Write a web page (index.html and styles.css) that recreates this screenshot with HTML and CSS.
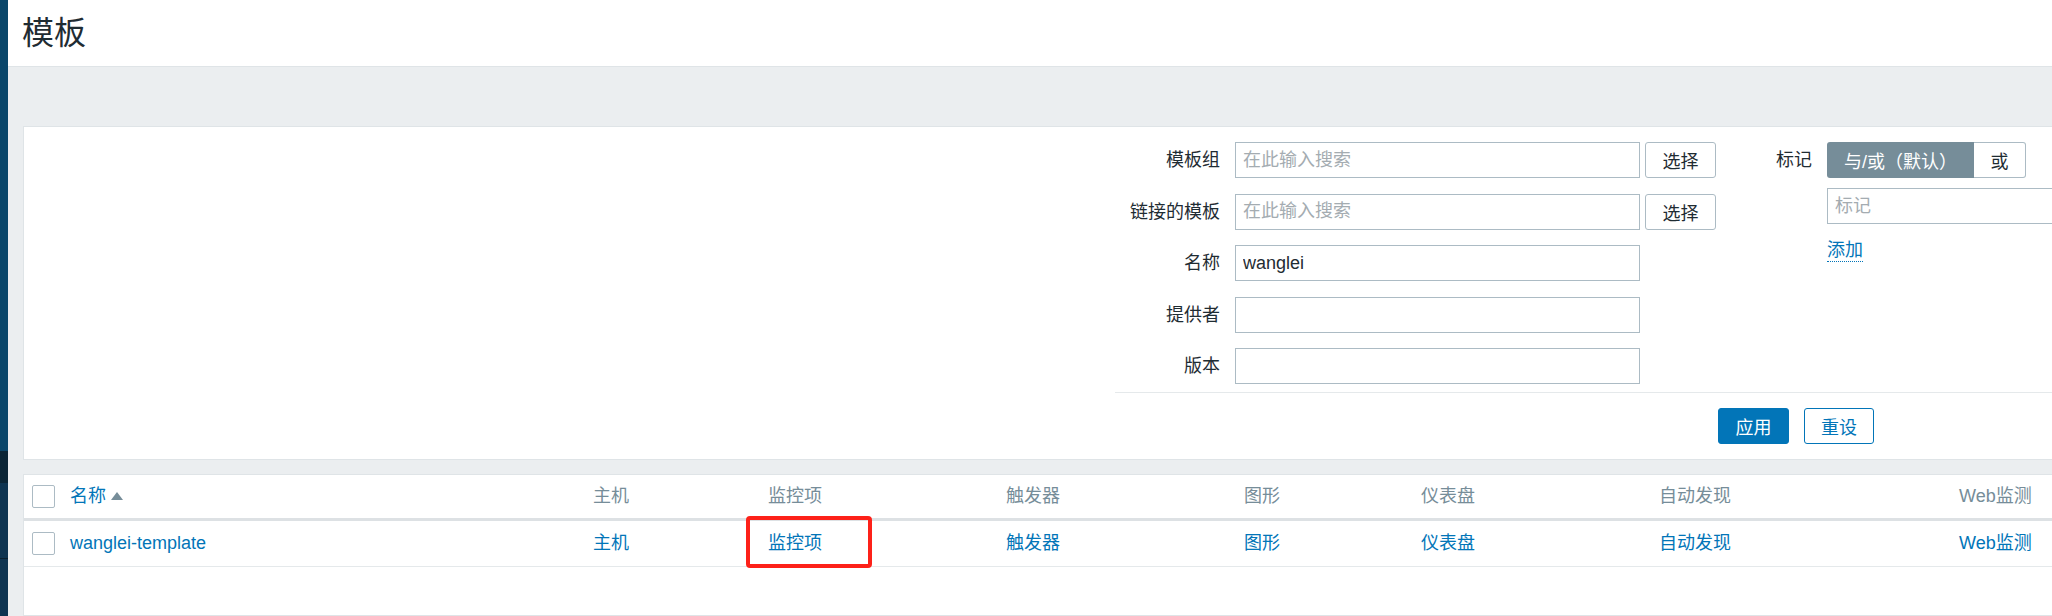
FILE: index.html
```html
<!DOCTYPE html>
<html lang="zh-CN">
<head>
<meta charset="utf-8">
<title>模板</title>
<link rel="stylesheet" href="styles.css">
</head>
<body>
<div class="app">
  <aside class="sidebar">
    <div class="sb-main"></div>
    <div class="sb-dark"></div>
    <div class="sb-item"></div>
    <div class="sb-item sb-last"></div>
  </aside>
  <main class="main">
    <header class="page-header"><h1>模板</h1></header>
    <div class="content">
      <section class="filter-panel">
        <form class="filter-form">
          <div class="filter-columns">
            <div class="filter-grid">
              <label class="f-label">模板组</label>
              <input class="f-input" type="text" placeholder="在此输入搜索">
              <div class="f-btn-cell"><button type="button" class="btn-select">选择</button></div>

              <label class="f-label">链接的模板</label>
              <input class="f-input" type="text" placeholder="在此输入搜索">
              <div class="f-btn-cell"><button type="button" class="btn-select">选择</button></div>

              <label class="f-label">名称</label>
              <input class="f-input" type="text" value="wanglei">
              <div></div>

              <label class="f-label">提供者</label>
              <input class="f-input" type="text">
              <div></div>

              <label class="f-label">版本</label>
              <input class="f-input" type="text">
              <div></div>
            </div>
            <div class="filter-tags">
              <span class="f-label tag-label">标记</span>
              <div class="tag-controls">
                <div class="toggle">
                  <span class="toggle-on">与/或（默认）</span>
                  <span class="toggle-off">或</span>
                </div>
                <input class="f-input tag-input" type="text" placeholder="标记">
                <a class="link-add" href="#">添加</a>
              </div>
            </div>
          </div>
          <div class="filter-divider"></div>
          <div class="filter-buttons">
            <button type="button" class="btn-primary">应用</button>
            <button type="button" class="btn-alt">重设</button>
          </div>
        </form>
      </section>

      <section class="table-panel">
        <table class="list-table">
          <colgroup>
            <col class="c-check">
            <col class="c-name">
            <col class="c-hosts">
            <col class="c-items">
            <col class="c-triggers">
            <col class="c-graphs">
            <col class="c-dash">
            <col class="c-disc">
            <col class="c-web">
          </colgroup>
          <thead>
            <tr>
              <th class="cell-check"><div class="cell"><span class="checkbox"></span></div></th>
              <th><div class="cell"><a class="link" href="#">名称</a><span class="sort-up"></span></div></th>
              <th><div class="cell">主机</div></th>
              <th><div class="cell">监控项</div></th>
              <th><div class="cell">触发器</div></th>
              <th><div class="cell">图形</div></th>
              <th><div class="cell">仪表盘</div></th>
              <th><div class="cell">自动发现</div></th>
              <th><div class="cell">Web监测</div></th>
            </tr>
          </thead>
          <tbody>
            <tr>
              <td class="cell-check"><div class="cell"><span class="checkbox"></span></div></td>
              <td><div class="cell"><a class="link" href="#">wanglei-template</a></div></td>
              <td><div class="cell"><a class="link" href="#">主机</a></div></td>
              <td><div class="cell"><a class="link" href="#">监控项</a><span class="highlight"></span></div></td>
              <td><div class="cell"><a class="link" href="#">触发器</a></div></td>
              <td><div class="cell"><a class="link" href="#">图形</a></div></td>
              <td><div class="cell"><a class="link" href="#">仪表盘</a></div></td>
              <td><div class="cell"><a class="link" href="#">自动发现</a></div></td>
              <td><div class="cell"><a class="link" href="#">Web监测</a></div></td>
            </tr>
          </tbody>
        </table>
      </section>
    </div>
  </main>
</div>
</body>
</html>
```

FILE: styles.css
```css
html, body {
  margin: 0;
  padding: 0;
  overflow: hidden;
}

body {
  font-family: "Liberation Sans", "Noto Sans CJK SC", sans-serif;
  font-size: 18px;
  color: #1f2c33;
  background: #ebeef0;
}

.app {
  display: flex;
  height: 616px;
}

/* sidebar strip */
.sidebar {
  width: 8px;
  flex: none;
  display: flex;
  flex-direction: column;
  background: #0a466a;
}
.sb-main { height: 451px; background: #0a466a; }
.sb-dark { height: 32px; background: #0b2536; }
.sb-item { height: 75px; background: #0e3451; border-bottom: 1px solid #0a1f2e; }
.sb-last { flex: 1; border-bottom: 0; }

.main {
  flex: 1;
  min-width: 0;
}

.page-header {
  height: 66px;
  background: #fff;
  border-bottom: 1px solid #dfe4e7;
  display: flex;
  align-items: center;
  padding-left: 14px;
}
.page-header h1 {
  margin: 0;
  font-size: 32px;
  font-weight: normal;
  line-height: 1;
  color: #1f2c33;
}

.content {
  padding: 59px 0 0 15px;
}

/* filter */
.filter-panel {
  background: #fff;
  border: 1px solid #dfe4e7;
  border-right: 0;
  padding: 15px 0;
}
.filter-form {
  margin: 0 0 0 1091px;
}
.filter-columns {
  display: flex;
  align-items: flex-start;
}
.filter-grid {
  display: grid;
  grid-template-columns: 120px 405px 76px;
  grid-auto-rows: 36px;
  row-gap: 15.6px;
  align-items: center;
}
.f-label {
  text-align: right;
  padding-right: 15px;
  line-height: 22px;
  color: #1f2c33;
  white-space: nowrap;
}
.f-input {
  box-sizing: border-box;
  height: 36px;
  width: 405px;
  margin: 0;
  border: 1px solid #acbbc4;
  border-radius: 0;
  padding: 0 7px;
  font-family: inherit;
  font-size: 18px;
  color: #1f2c33;
  background: #fff;
  outline: none;
}
.f-input::placeholder {
  color: #a4acb1;
}
.f-btn-cell {
  padding-left: 5px;
  height: 36px;
}
.btn-select {
  box-sizing: border-box;
  width: 71px;
  height: 36px;
  margin: 0;
  padding: 0;
  border: 1px solid #acbbc4;
  border-radius: 3px;
  background: #fff;
  font-family: inherit;
  font-size: 18px;
  color: #1f2c33;
}

.filter-tags {
  display: flex;
  align-items: flex-start;
}
.tag-label {
  width: 96px;
  line-height: 36px;
}
.tag-controls {
  display: flex;
  flex-direction: column;
  align-items: flex-start;
  gap: 10px;
}
.toggle {
  display: flex;
  height: 36px;
}
.toggle-on {
  width: 147px;
  background: #768d99;
  color: #fff;
  border-radius: 3px 0 0 3px;
  display: flex;
  align-items: center;
  justify-content: center;
}
.toggle-off {
  box-sizing: border-box;
  width: 52px;
  border: 1px solid #acbbc4;
  border-left: 0;
  border-radius: 0 3px 3px 0;
  display: flex;
  align-items: center;
  justify-content: center;
  color: #1f2c33;
}
.tag-input {
  width: 300px;
}
.link-add {
  margin-top: 5px;
  line-height: 22px;
  color: #0275b8;
  text-decoration: none;
  border-bottom: 1px dotted #0275b8;
}

.filter-divider {
  height: 1px;
  background: #e5e9eb;
  margin-top: 7.6px;
}
.filter-buttons {
  display: flex;
  gap: 15px;
  margin-top: 15px;
  padding-left: 603px;
}
.btn-primary,
.btn-alt {
  box-sizing: border-box;
  height: 36px;
  margin: 0;
  padding: 0;
  border-radius: 3px;
  font-family: inherit;
  font-size: 18px;
}
.btn-primary {
  width: 71px;
  background: #0275b8;
  border: 1px solid #0275b8;
  color: #fff;
}
.btn-alt {
  width: 70px;
  background: #fff;
  border: 1px solid #0275b8;
  color: #0275b8;
}

/* table */
.table-panel {
  margin-top: 14px;
  background: #fff;
  border: 1px solid #dfe4e7;
  border-right: 0;
  padding-bottom: 48px;
}
.list-table {
  border-collapse: separate;
  border-spacing: 0;
  table-layout: fixed;
  width: 2135px;
}
.c-check { width: 46px; }
.c-name { width: 523px; }
.c-hosts { width: 175px; }
.c-items { width: 238px; }
.c-triggers { width: 238px; }
.c-graphs { width: 177px; }
.c-dash { width: 238px; }
.c-disc { width: 300px; }
.c-web { width: 200px; }

.list-table th,
.list-table td {
  padding: 0;
  text-align: left;
  font-weight: normal;
  white-space: nowrap;
}
.list-table th {
  color: #768d99;
  border-bottom: 3px solid #dde1e4;
}
.list-table td {
  border-bottom: 1px solid #e5e9eb;
}
.cell {
  position: relative;
  display: flex;
  align-items: center;
  line-height: 22px;
}
.list-table th .cell { height: 43px; }
.list-table td .cell { height: 45px; }
.cell-check .cell { padding-left: 8px; }

.checkbox {
  box-sizing: border-box;
  width: 23px;
  height: 23px;
  border: 1px solid #acbbc4;
  border-radius: 2px;
  background: #fff;
}
.link {
  color: #0275b8;
  text-decoration: none;
}
.sort-up {
  width: 0;
  height: 0;
  margin-left: 5px;
  border-left: 6px solid transparent;
  border-right: 6px solid transparent;
  border-bottom: 8px solid #768d99;
}
.highlight {
  position: absolute;
  left: -22px;
  top: -5px;
  width: 126px;
  height: 52px;
  box-sizing: border-box;
  border: 4px solid #fd2119;
  border-radius: 4px;
}
```
